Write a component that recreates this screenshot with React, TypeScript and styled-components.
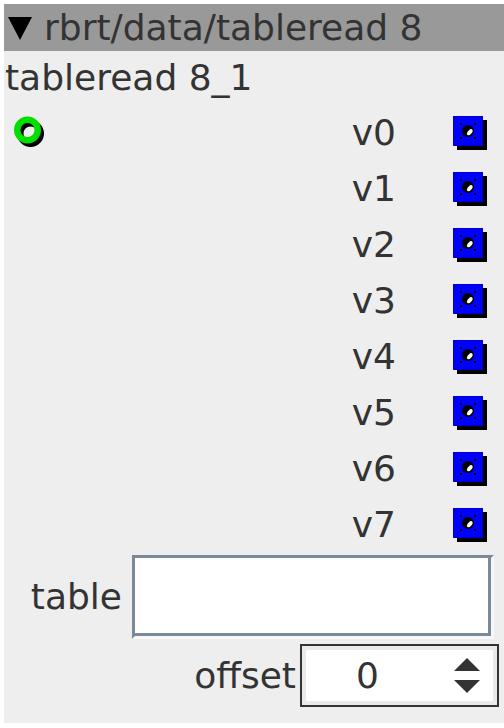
import React from 'react';
import styled, { createGlobalStyle } from 'styled-components';

const GlobalStyle = createGlobalStyle`
    html, body {
        margin: 0;
        padding: 0;
        background: #ffffff;
        overflow: hidden;
    }
    body {
        padding: 4px 0 0 4px;
        font-family: 'DejaVu Sans', sans-serif;
    }
`;

const Panel = styled.div`
    width: 500px;
    height: 719px;
    background: #eeeeee;
    color: #333333;
    font-size: 36px;
    display: flex;
    flex-direction: column;
`;

const Header = styled.div`
    height: 47px;
    background: #999999;
    display: flex;
    align-items: center;
    gap: 11px;
    padding-left: 3px;
    white-space: nowrap;
    line-height: 1;
`;

const NodeName = styled.div`
    height: 54px;
    display: flex;
    align-items: center;
    padding-left: 1px;
    line-height: 1;
`;

const PortList = styled.div`
    display: flex;
    flex-direction: column;
`;

const PortRow = styled.div`
    height: 56px;
    display: grid;
    grid-template-columns: 1fr auto 34px;
    align-items: center;
    padding-right: 17px;
    column-gap: 57px;
`;

const Label = styled.span`
    text-align: right;
    line-height: 1;
`;

const InputSlot = styled.div`
    display: flex;
    align-items: center;
    padding-left: 9px;
`;

const FieldRow = styled.div<{ $top: number; $labelWidth: number; $gap: number }>`
    display: flex;
    align-items: center;
    margin-top: ${(p) => p.$top}px;
    gap: ${(p) => p.$gap}px;
    line-height: 1;

    & > span {
        width: ${(p) => p.$labelWidth}px;
        text-align: right;
    }
`;

const TextFieldOuter = styled.div`
    width: 362px;
    height: 84px;
    box-sizing: border-box;
    border-style: solid;
    border-width: 3px;
    border-color: #7a8a99 #f8f8f8 #f8f8f8 #7a8a99;
`;

const TextFieldInner = styled.input`
    display: block;
    width: 100%;
    height: 100%;
    box-sizing: border-box;
    margin: 0;
    padding: 0 10px;
    background: #ffffff;
    border-style: solid;
    border-width: 0 3px 3px 0;
    border-color: #7a8a99;
    font: inherit;
    outline: none;
`;

const SpinBox = styled.div`
    width: 199px;
    height: 63px;
    box-sizing: border-box;
    border: 2px solid #333333;
    background: #ffffff;
    display: flex;
    align-items: center;
    box-shadow: inset 0 0 0 4px #eaeaea;
`;

const SpinValue = styled.span`
    flex: 1;
    padding-left: 54px;
`;

const SpinArrows = styled.div`
    width: 28px;
    margin-right: 16px;
    display: flex;
    flex-direction: column;
    gap: 9px;
`;

const Triangle = () => (
    <svg width="26" height="24" viewBox="0 0 26 24">
        <polygon points="1,1 25,1 13,24" fill="#000" />
    </svg>
);

const BluePort = () => (
    <svg width="34" height="34" viewBox="0 0 34 34">
        <rect x="4" y="4" width="30" height="30" fill="#000" />
        <rect x="0.5" y="0.5" width="29" height="29" fill="#0000ff" stroke="#0000c8" />
        <rect x="7" y="7" width="2" height="2" fill="#000" />
        <rect x="21" y="7" width="2" height="2" fill="#000" />
        <rect x="7" y="21" width="2" height="2" fill="#000" />
        <rect x="21" y="21" width="2" height="2" fill="#000" />
        <circle cx="15" cy="15" r="6" fill="#000" />
        <ellipse cx="16.8" cy="16.2" rx="2" ry="3.6" transform="rotate(40 16.8 16.2)" fill="#fff" />
    </svg>
);

const GreenPort = () => (
    <svg width="34" height="34" viewBox="0 0 34 34">
        <circle cx="17.5" cy="17.5" r="10.25" fill="none" stroke="#000" strokeWidth="6.5" />
        <circle cx="14.5" cy="14" r="10.25" fill="none" stroke="#00e000" strokeWidth="6.5" />
    </svg>
);

const outputs = ['v0', 'v1', 'v2', 'v3', 'v4', 'v5', 'v6', 'v7'];

export default function App() {
    return (
        <>
            <GlobalStyle />
            <Panel>
                <Header>
                    <Triangle />
                    <span>rbrt/data/tableread 8</span>
                </Header>
                <NodeName>tableread 8_1</NodeName>
                <PortList>
                    {outputs.map((name, i) => (
                        <PortRow key={name}>
                            <InputSlot>{i === 0 && <GreenPort />}</InputSlot>
                            <Label>{name}</Label>
                            <BluePort />
                        </PortRow>
                    ))}
                </PortList>
                <FieldRow $top={2} $labelWidth={118} $gap={10}>
                    <span>table</span>
                    <TextFieldOuter>
                        <TextFieldInner type="text" />
                    </TextFieldOuter>
                </FieldRow>
                <FieldRow $top={5} $labelWidth={292} $gap={4}>
                    <span>offset</span>
                    <SpinBox>
                        <SpinValue>0</SpinValue>
                        <SpinArrows>
                            <svg width="28" height="13" viewBox="0 0 28 13">
                                <polygon points="14,0 27,13 1,13" fill="#333" />
                            </svg>
                            <svg width="28" height="13" viewBox="0 0 28 13">
                                <polygon points="1,0 27,0 14,13" fill="#333" />
                            </svg>
                        </SpinArrows>
                    </SpinBox>
                </FieldRow>
            </Panel>
        </>
    );
}
